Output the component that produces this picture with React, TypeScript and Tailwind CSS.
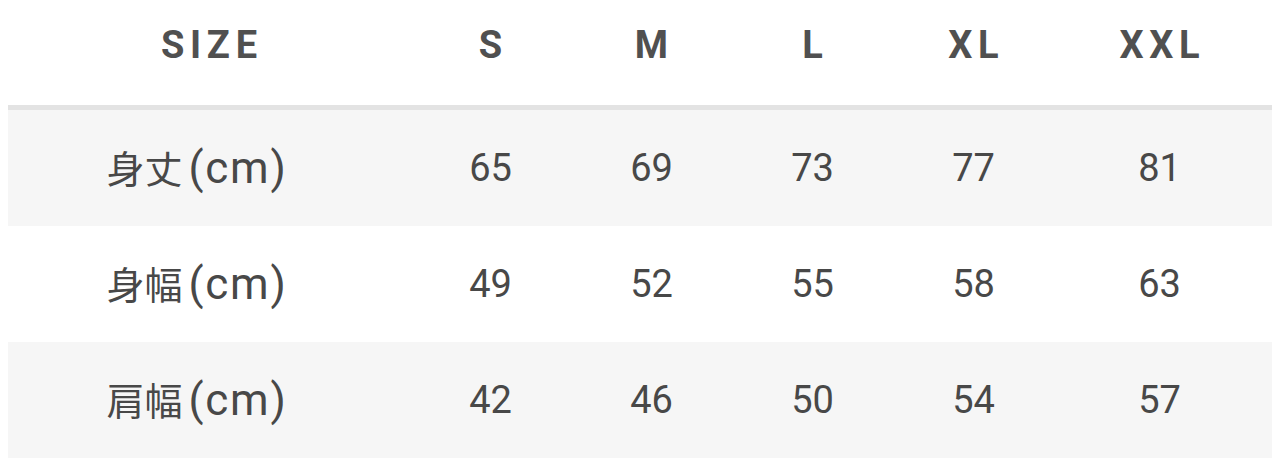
import React from 'react';

const sizes = ['S', 'M', 'L', 'XL', 'XXL'];

const rows = [
  { label: '身丈', values: [65, 69, 73, 77, 81] },
  { label: '身幅', values: [49, 52, 55, 58, 63] },
  { label: '肩幅', values: [42, 46, 50, 54, 57] },
];

const cols = 'grid grid-cols-[402px_161px_161px_161px_161px_211px]';

const App: React.FC = () => {
  return (
    <div
      className="w-[1280px] h-[476px] bg-white px-2 text-[#484848]"
      style={{ fontFamily: "Roboto, 'Noto Sans CJK JP', sans-serif" }}
    >
      {/* Header */}
      <div className={`${cols} h-[110px] items-center pb-[14px] border-b-[5px] border-[#e3e3e3]`}>
        <div className="text-center text-[38px] font-bold tracking-[0.15em] pl-[0.15em] text-[#505050]">SIZE</div>
        {sizes.map((s) => (
          <div key={s} className="text-center text-[38px] font-bold tracking-[0.15em] pl-[0.15em] text-[#505050]">
            {s}
          </div>
        ))}
      </div>

      {/* Body */}
      {rows.map((row, i) => (
        <div
          key={row.label}
          className={`${cols} h-[116px] items-center ${i % 2 === 0 ? 'bg-[#f6f6f6]' : 'bg-white'}`}
        >
          <div className="flex items-baseline justify-center pr-[24px]">
            <span className="text-[38px] font-['Noto_Sans_CJK_JP',sans-serif]">{row.label}</span>
            <span className="text-[44px] ml-[6px] tracking-[0.04em]">(cm)</span>
          </div>
          {row.values.map((v, j) => (
            <div key={j} className="text-center text-[38px]">
              {v}
            </div>
          ))}
        </div>
      ))}
    </div>
  );
};

export default App;
